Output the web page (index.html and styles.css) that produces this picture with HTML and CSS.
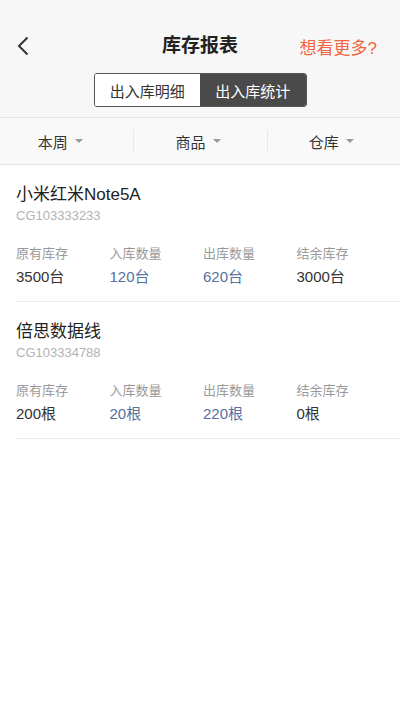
FILE: index.html
```html
<!DOCTYPE html>
<html lang="zh-CN">
<head>
  <meta charset="UTF-8">
  <title>库存报表</title>
  <meta name="viewport" content="width=device-width, initial-scale=1.0">
  <link rel="stylesheet" href="styles.css">
</head>
<body>
  <header class="nav">
    <div class="nav-row">
      <button class="back-btn" title="返回">
        <svg width="12" height="20" viewBox="0 0 12 20"><path d="M10.5 1.5 L2 10 L10.5 18.5" fill="none" stroke="#333" stroke-width="2"/></svg>
      </button>
      <h1 class="nav-title">库存报表</h1>
      <a class="more-link">想看更多?</a>
    </div>
    <div class="segment">
      <button class="seg-btn">出入库明细</button>
      <button class="seg-btn active">出入库统计</button>
    </div>
  </header>

  <div class="filters">
    <div class="filter">本周<span class="caret"></span></div>
    <div class="filter">商品<span class="caret"></span></div>
    <div class="filter">仓库<span class="caret"></span></div>
  </div>

  <ul class="report-list">
    <li class="report-item">
      <div class="item-name">小米红米Note5A</div>
      <div class="item-code">CG103333233</div>
      <div class="stats">
        <div class="stat"><span class="stat-label">原有库存</span><span class="stat-value">3500台</span></div>
        <div class="stat"><span class="stat-label">入库数量</span><span class="stat-value blue">120台</span></div>
        <div class="stat"><span class="stat-label">出库数量</span><span class="stat-value blue">620台</span></div>
        <div class="stat"><span class="stat-label">结余库存</span><span class="stat-value">3000台</span></div>
      </div>
    </li>
    <li class="report-item">
      <div class="item-name">倍思数据线</div>
      <div class="item-code">CG103334788</div>
      <div class="stats">
        <div class="stat"><span class="stat-label">原有库存</span><span class="stat-value">200根</span></div>
        <div class="stat"><span class="stat-label">入库数量</span><span class="stat-value blue">20根</span></div>
        <div class="stat"><span class="stat-label">出库数量</span><span class="stat-value blue">220根</span></div>
        <div class="stat"><span class="stat-label">结余库存</span><span class="stat-value">0根</span></div>
      </div>
    </li>
  </ul>
</body>
</html>
```

FILE: styles.css
```css
:root {
  --nav-bg: #f7f7f7;
  --filter-bg: #f9f9f9;
  --line-color: #e6e6e6;
  --text-color: #222222;
  --sub-color: #999999;
  --code-color: #b3b3b3;
  --accent-color: #f2643f;
  --blue-color: #56709f;
  --dark-btn: #4a4a4a;
}

* {
  box-sizing: border-box;
}

body {
  font-family: 'Liberation Sans', 'Noto Sans CJK SC', sans-serif;
  margin: 0;
  background-color: #ffffff;
  color: var(--text-color);
}

.nav {
  background-color: var(--nav-bg);
  padding: 28px 0 10px;
  border-bottom: 1px solid var(--line-color);
}

.nav-row {
  height: 36px;
  display: flex;
  align-items: center;
  justify-content: space-between;
  padding: 0 23px 0 16px;
  position: relative;
}

.back-btn {
  background: transparent;
  border: none;
  padding: 0;
  width: 14px;
  height: 20px;
  display: flex;
  align-items: center;
  justify-content: center;
  cursor: pointer;
}

.nav-title {
  position: absolute;
  left: 0;
  right: 0;
  margin: 0;
  text-align: center;
  font-size: 19px;
  font-weight: 700;
  line-height: 36px;
  pointer-events: none;
}

.more-link {
  font-size: 17px;
  color: var(--accent-color);
  cursor: pointer;
}

.segment {
  display: flex;
  width: 213px;
  height: 34px;
  margin: 9px auto 0;
  border: 1px solid #555555;
  border-radius: 3px;
  overflow: hidden;
}

.seg-btn {
  flex: 1;
  border: none;
  background-color: #ffffff;
  color: #333333;
  font-family: inherit;
  font-size: 15px;
  padding: 0;
  cursor: pointer;
}

.seg-btn.active {
  background-color: var(--dark-btn);
  color: #ffffff;
}

.filters {
  display: grid;
  grid-template-columns: repeat(3, 1fr);
  height: 47px;
  background-color: var(--filter-bg);
  border-bottom: 1px solid var(--line-color);
  align-items: center;
}

.filter {
  display: flex;
  align-items: center;
  justify-content: center;
  gap: 7px;
  padding-right: 5px;
  font-size: 15px;
  color: #333333;
  height: 22px;
  cursor: pointer;
}

.filter:first-child {
  padding-right: 13px;
}

.filter + .filter {
  border-left: 1px solid #e9e9e9;
}

.caret {
  width: 0;
  height: 0;
  border-left: 4px solid transparent;
  border-right: 4px solid transparent;
  border-top: 4px solid #999999;
}

.report-list {
  list-style: none;
  margin: 0;
  padding: 0 0 0 16px;
}

.report-item {
  padding: 18px 0 13px;
  border-bottom: 1px solid #ececec;
}

.item-name {
  font-size: 17px;
  line-height: 24px;
}

.item-code {
  font-size: 13px;
  line-height: 18px;
  color: var(--code-color);
}

.stats {
  display: grid;
  grid-template-columns: repeat(4, 93.5px);
  margin-top: 20px;
}

.stat {
  display: flex;
  flex-direction: column;
}

.stat-label {
  font-size: 13px;
  line-height: 18px;
  color: var(--sub-color);
}

.stat-value {
  font-size: 15px;
  line-height: 22px;
  margin-top: 3px;
  color: #333333;
}

.stat-value.blue {
  color: var(--blue-color);
}
```
